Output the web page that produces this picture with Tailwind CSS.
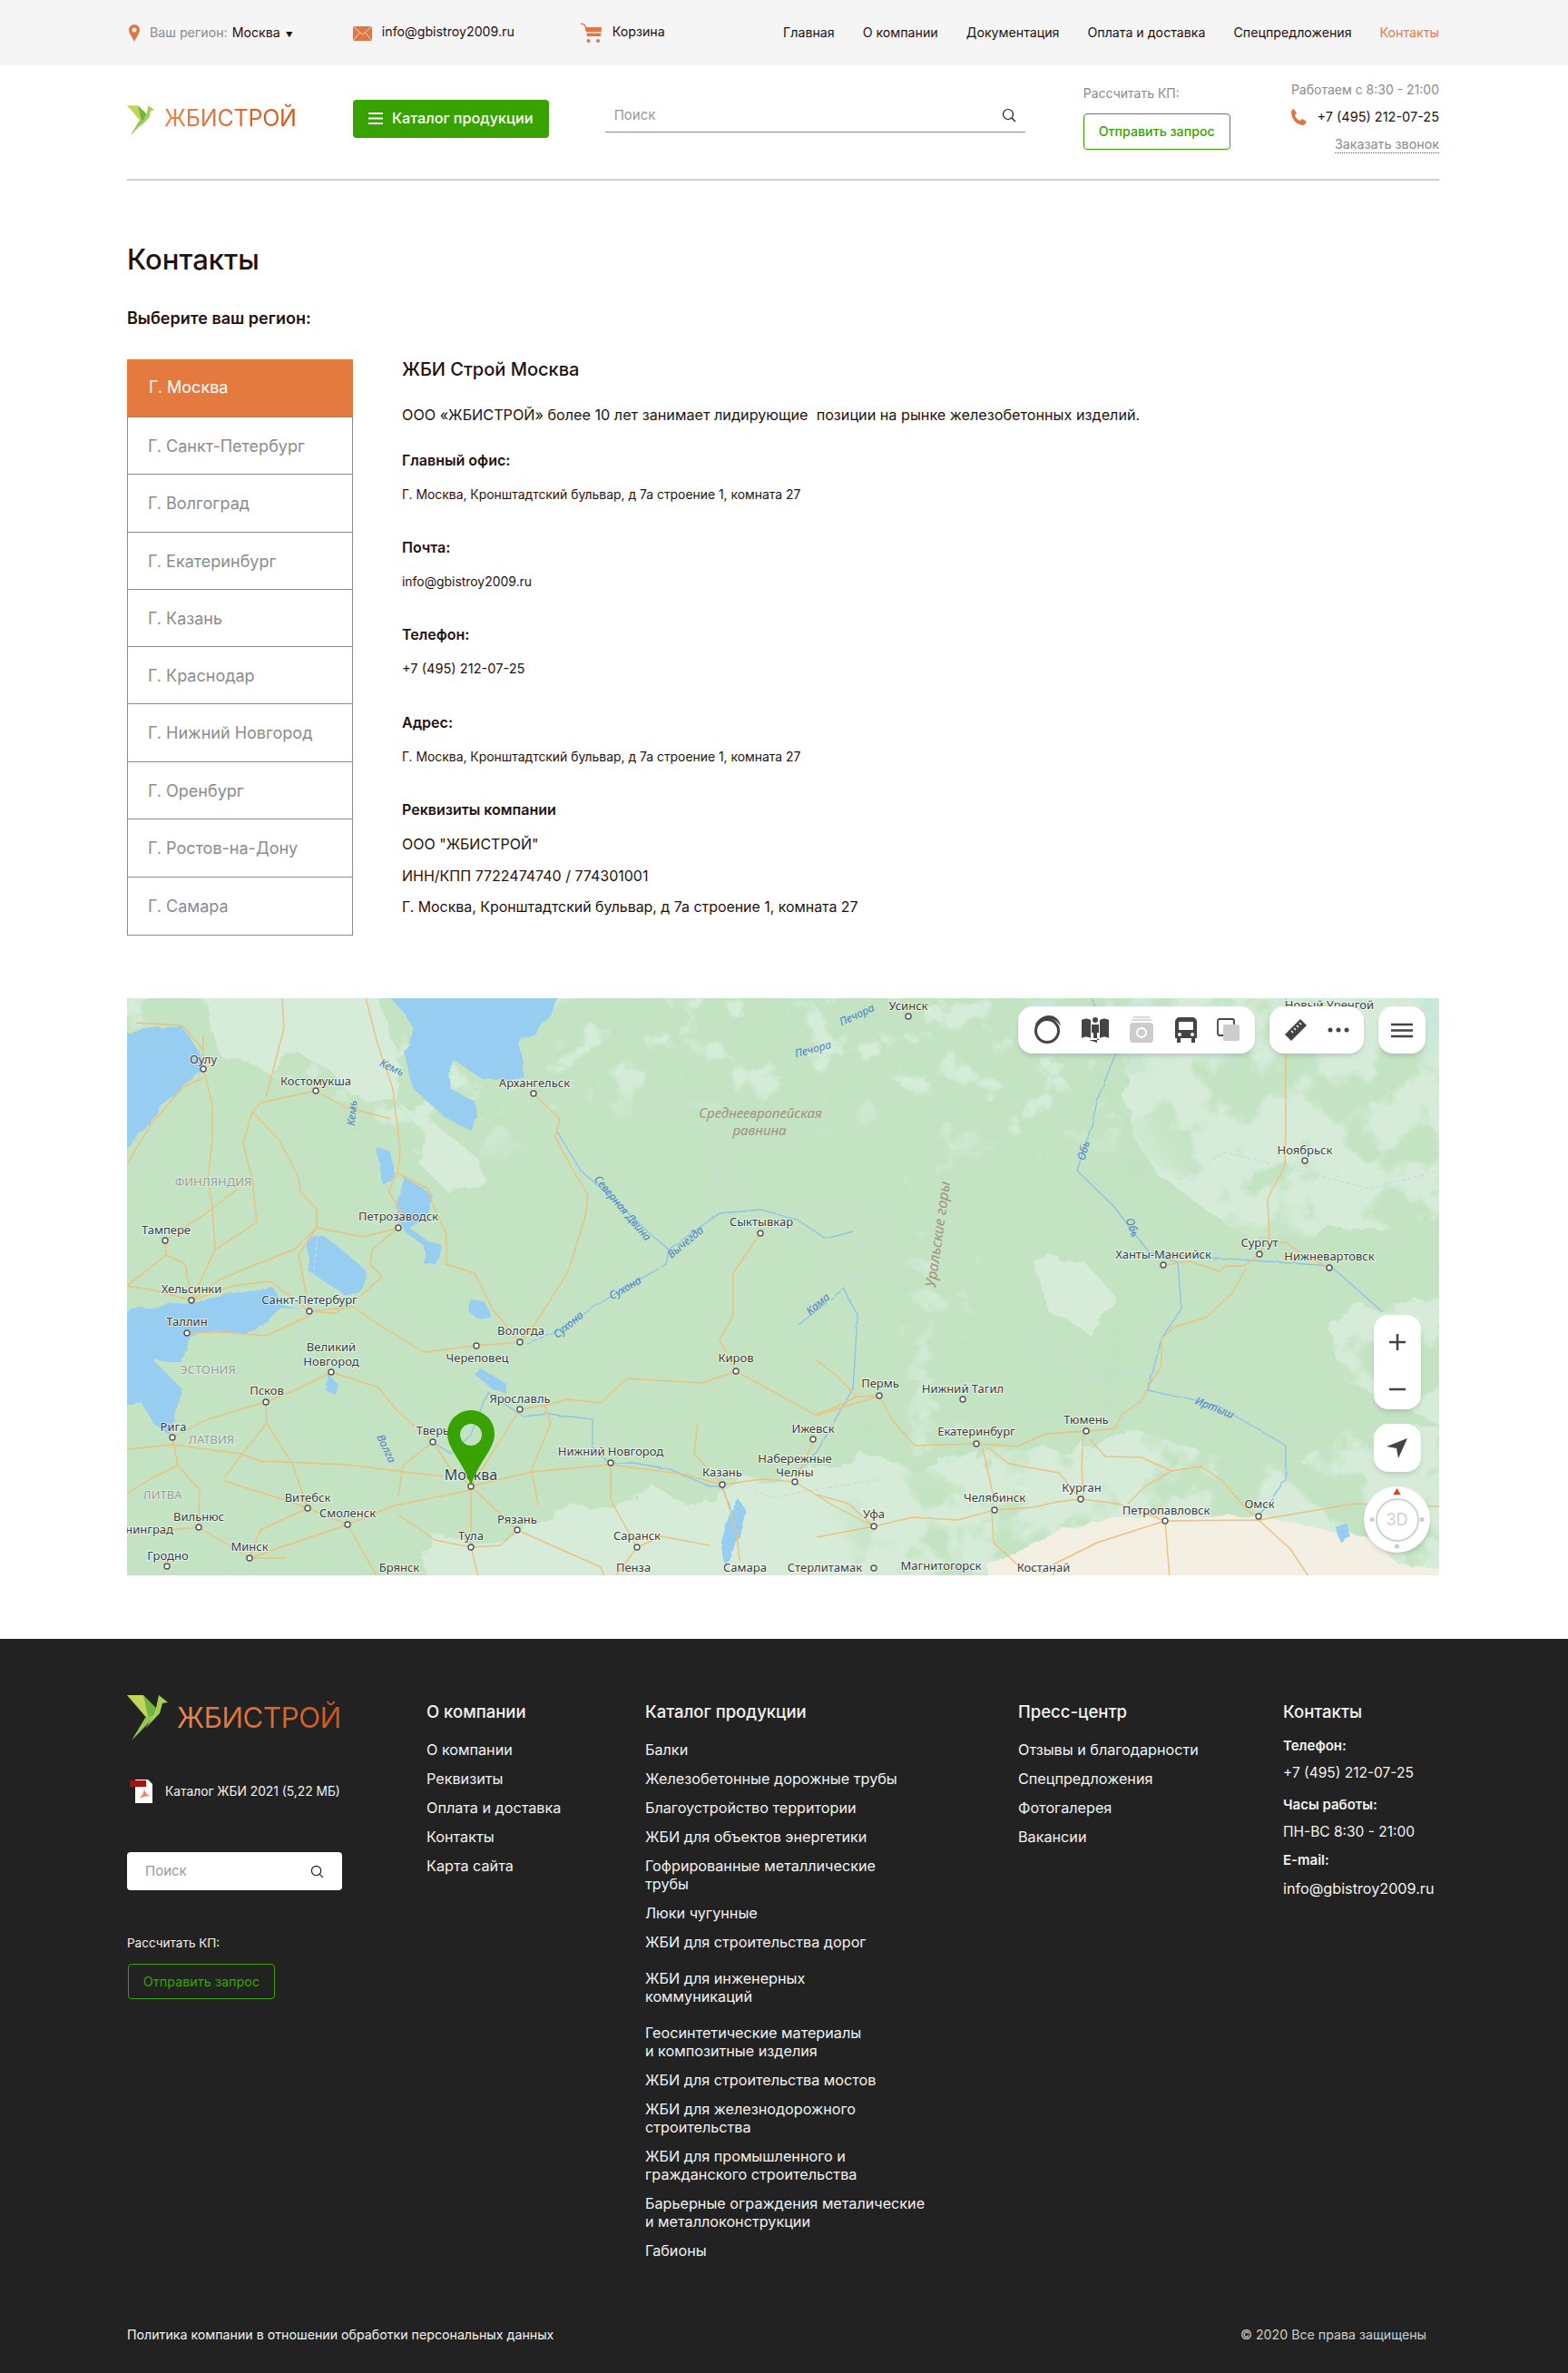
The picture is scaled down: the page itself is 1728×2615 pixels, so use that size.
<!DOCTYPE html>
<html lang="ru">
<head>
    <meta charset="UTF-8">
    <meta name="viewport" content="width=device-width, initial-scale=1.0">
    <title>Контакты - ЖБИСТРОЙ</title>
    <script src="https://cdn.jsdelivr.net/npm/@tailwindcss/browser@4"></script>
</head>
<body class="bg-white text-[#1f1210] font-['Inter',sans-serif] text-[16px]">

    <!-- top bar -->
    <div class="h-[72px] bg-[#f5f5f5]">
        <div class="w-[1446px] ml-[140px] h-full flex items-center text-[14.2px]">
            <svg class="w-[12px] h-[19px] ml-[2px] mt-[1px]" viewBox="0 0 12 19"><path fill-rule="evenodd" fill="#dd7744" d="M6 0a6 6 0 0 1 6 6c0 4-4 8-6 13C4 14 0 10 0 6a6 6 0 0 1 6-6zm0 3.500a2.500 2.500 0 1 0 0 5 2.500 2.500 0 0 0 0-5z"/></svg>
            <span class="ml-[11px] text-[#8c8c8c]">Ваш регион:</span>
            <span class="ml-[5px]">Москва</span>
            <span class="ml-[6px] text-[8px] mt-[3px]">▼</span>
            <svg class="w-[21px] h-[16px] ml-[66px] mt-[2px]" viewBox="0 0 21 16"><rect width="21" height="16" fill="#dd7744"/><path d="M0 0l10.500 9L21 0M0 16l7.500-9M21 16l-7.500-9" fill="none" stroke="#f7d9c8" stroke-width="1"/></svg>
            <span class="ml-[11px] -mt-[2px]">info@gbistroy2009.ru</span>
            <svg class="w-[23px] h-[22px] ml-[73px]" viewBox="0 0 23 22"><path fill="#dd7744" d="M0 0l5 2 1 3h17l-1 10H7L4 3 0 1.500z"/><circle cx="8.500" cy="20" r="2" fill="#dd7744"/><circle cx="19" cy="20" r="2" fill="#dd7744"/><rect x="6" y="10" width="16" height="1.500" fill="#f5f5f5"/></svg>
            <span class="ml-[12px] -mt-[2px]">Корзина</span>
            <nav class="ml-auto flex gap-[31px] -mt-[1px]">
                <a href="#">Главная</a>
                <a href="#">О компании</a>
                <a href="#">Документация</a>
                <a href="#">Оплата и доставка</a>
                <a href="#">Спецпредложения</a>
                <a href="#" class="text-[#e57b45]">Контакты</a>
            </nav>
        </div>
    </div>

    <!-- header -->
    <header class="w-[1446px] ml-[140px] h-[127px] border-b-2 border-[#cfcfcf] flex items-center relative">
        <svg class="w-[31px] h-[34px] -mt-[3px]" viewBox="0 0 46 50"><path fill="#c0d65a" d="M0 0h18l8 15-2 13z"/><path fill="#74b243" d="M18 0l14 14-6 14-2 0z"/><path fill="#93c653" d="M20 25l13-4L5 50z"/><path fill="#a5cf52" d="M26 28l6-14 3-14 10 8-6 1-3 11-16 17z"/></svg>
        <span class="ml-[10px] -mt-[9px] text-[25px] leading-[1.3] tracking-[-0.2px] bg-linear-to-r from-[#e8854d] to-[#cf5514] bg-clip-text text-transparent">ЖБИСТРОЙ</span>
        <a href="#" class="ml-[62px] w-[216px] h-[42px] rounded-[4px] bg-[#38a200] text-white flex items-center justify-center text-[16.2px] font-medium -mt-[8px]">
            <svg class="w-[16px] h-[13px] mr-[10px]" viewBox="0 0 16 13"><path d="M0 1h16M0 6.500h16M0 12h16" stroke="#fff" stroke-width="2"/></svg>
            Каталог продукции
        </a>
        <div class="ml-[62px] w-[463px] h-[37px] border-b border-[#de6c32] flex items-center justify-between pl-[10px] pr-[10px] -mt-[14px] text-[15px] text-[#9a9a9a]">
            <span>Поиск</span>
            <svg class="w-[16px] h-[16px]" viewBox="0 0 16 16"><circle cx="7" cy="7" r="5.500" fill="none" stroke="#1f1210" stroke-width="1.200"/><path d="M11 11l4 4" stroke="#1f1210" stroke-width="1.200"/></svg>
        </div>
        <div class="ml-[64px] w-[163px] -mt-[14px]">
            <div class="text-[14px] text-[#8c8c8c] mb-[12px] mt-[1px]">Рассчитать КП:</div>
            <a href="#" class="w-[162px] h-[40px] rounded-[4px] border border-[#38a200] text-[#38a200] text-[14.2px] font-medium flex items-center justify-center">Отправить запрос</a>
        </div>
        <div class="ml-auto -mt-[12px] flex flex-col items-end">
            <div class="text-[14px] text-[#8c8c8c] leading-[20px]">Работаем с 8:30 - 21:00</div>
            <div class="flex items-center text-[14.5px] leading-[20px] mt-[10px]">
                <svg class="w-[18px] h-[18px] mr-[11px]" viewBox="0 0 18 18"><path fill="#dd7744" d="M4 0l3 5-2 2c1 3 3 5 6 6l2-2 5 3-2 3c-1 1-2 1-3 1C6 17 1 10 1 4c0-1 0-2 1-3z"/></svg>
                +7 (495) 212-07-25
            </div>
            <a href="#" class="text-[14.3px] text-[#8c8c8c] leading-[18px] mt-[11px] border-b border-dotted border-[#555]">Заказать звонок</a>
        </div>
    </header>

    <!-- contacts -->
    <main class="w-[1446px] ml-[140px]">
        <h1 class="mt-[67px] text-[31px] leading-[40px] font-medium">Контакты</h1>
        <p class="mt-[33px] text-[18px] leading-[24px] font-semibold">Выберите ваш регион:</p>

        <div class="mt-[33px] flex h-[635px]">
            <ul class="w-[249px] text-[18px] shrink-0 border-x border-b border-[#8a8a8a] text-[#8c8c8c] flex flex-col">
                <li class="h-[64px] -mx-px bg-[#e57a40] text-white flex items-center pl-[24px] pb-[2px] border-b border-[#8a8a8a]">Г. Москва</li>
                <li class="h-[63px] flex items-center pl-[22px] border-b border-[#8a8a8a]">Г. Санкт-Петербург</li>
                <li class="h-[64px] flex items-center pl-[22px] border-b border-[#8a8a8a]">Г. Волгоград</li>
                <li class="h-[63px] flex items-center pl-[22px] border-b border-[#8a8a8a]">Г. Екатеринбург</li>
                <li class="h-[63px] flex items-center pl-[22px] border-b border-[#8a8a8a]">Г. Казань</li>
                <li class="h-[63px] flex items-center pl-[22px] border-b border-[#8a8a8a]">Г. Краснодар</li>
                <li class="h-[64px] flex items-center pl-[22px] border-b border-[#8a8a8a]">Г. Нижний Новгород</li>
                <li class="h-[63px] flex items-center pl-[22px] border-b border-[#8a8a8a]">Г. Оренбург</li>
                <li class="h-[64px] flex items-center pl-[22px] border-b border-[#8a8a8a]">Г. Ростов-на-Дону</li>
                <li class="h-[63px] flex items-center pl-[22px]">Г. Самара</li>
            </ul>
            <div class="ml-[54px]">
                <h2 class="text-[20px] leading-[24px] font-medium -mt-px">ЖБИ Строй Москва</h2>
                <p class="mt-[26px] leading-[24px] text-[16.2px]">ООО «ЖБИСТРОЙ» более 10 лет занимает лидирующие&nbsp; позиции на рынке железобетонных изделий.</p>
                <h3 class="mt-[26px] leading-[24px] font-semibold text-[16px]">Главный офис:</h3>
                <p class="mt-[14px] leading-[24px] text-[13.9px]">Г. Москва, Кронштадтский бульвар, д 7а строение 1, комната 27</p>
                <h3 class="mt-[34px] leading-[24px] font-semibold text-[16px]">Почта:</h3>
                <p class="mt-[14px] leading-[24px] text-[13.9px]">info@gbistroy2009.ru</p>
                <h3 class="mt-[34px] leading-[24px] font-semibold text-[16px]">Телефон:</h3>
                <p class="mt-[14px] leading-[24px] text-[14.6px]">+7 (495) 212-07-25</p>
                <h3 class="mt-[35px] leading-[24px] font-semibold text-[16px]">Адрес:</h3>
                <p class="mt-[14px] leading-[24px] text-[13.9px]">Г. Москва, Кронштадтский бульвар, д 7а строение 1, комната 27</p>
                <h3 class="mt-[34px] leading-[24px] font-semibold text-[16px]">Реквизиты компании</h3>
                <p class="mt-[14px] leading-[24px]">ООО "ЖБИСТРОЙ"</p>
                <p class="mt-[11px] leading-[24px]">ИНН/КПП 7722474740 / 774301001</p>
                <p class="mt-[11px] leading-[24px] text-[15.9px]">Г. Москва, Кронштадтский бульвар, д 7а строение 1, комната 27</p>
            </div>
        </div>

        <!-- map -->
        <div class="relative mt-[69px] h-[636px] overflow-hidden">
            <svg class="absolute inset-0 w-full h-full" viewBox="0 0 1446 636">
                <defs>
                    <filter id="rough" x="-5%" y="-5%" width="110%" height="110%"><feTurbulence type="fractalNoise" baseFrequency=".035" numOctaves="4" seed="3"/><feDisplacementMap in="SourceGraphic" scale="26"/></filter>
                    <filter id="coast" x="-5%" y="-5%" width="110%" height="110%"><feTurbulence type="fractalNoise" baseFrequency=".05" numOctaves="3" seed="5"/><feDisplacementMap in="SourceGraphic" scale="8"/></filter>
                    <filter id="wiggle" x="-5%" y="-5%" width="110%" height="110%"><feTurbulence type="fractalNoise" baseFrequency=".06" numOctaves="2" seed="9"/><feDisplacementMap in="SourceGraphic" scale="3"/></filter>
                    <filter id="soft" x="-30%" y="-30%" width="160%" height="160%"><feGaussianBlur stdDeviation="22"/></filter>
                    <filter id="patchLight" x="0" y="0" width="100%" height="100%" color-interpolation-filters="sRGB"><feTurbulence type="fractalNoise" baseFrequency=".028" numOctaves="5" seed="11"/><feColorMatrix values="0 0 0 0 .835  0 0 0 0 .925  0 0 0 0 .85  7 0 0 0 -3.950"/></filter>
                    <filter id="patchMid" x="0" y="0" width="100%" height="100%" color-interpolation-filters="sRGB"><feTurbulence type="fractalNoise" baseFrequency=".016" numOctaves="5" seed="21"/><feColorMatrix values="0 0 0 0 .765  0 0 0 0 .89  0 0 0 0 .76  9 0 0 0 -4.500"/></filter>
                    <filter id="patchTeal" x="0" y="0" width="100%" height="100%" color-interpolation-filters="sRGB"><feTurbulence type="fractalNoise" baseFrequency=".02" numOctaves="4" seed="31"/><feColorMatrix values="0 0 0 0 .78  0 0 0 0 .91  0 0 0 0 .85  8 0 0 0 -4.200"/></filter>
                    <mask id="maskNorth" maskUnits="userSpaceOnUse" x="0" y="0" width="1446" height="636"><path fill="#fff" filter="url(#soft)" d="M-60 -60H1120V150L1000 175 900 130 740 130 600 110 470 130 340 190 400 215 340 220 240 110 100 70-60 30z"/></mask>
                    <mask id="maskUral" maskUnits="userSpaceOnUse" x="0" y="0" width="1446" height="636"><path fill="#fff" d="M875 140L925 140 925 660 860 660 860 500z" filter="url(#soft)"/></mask>
                    <mask id="maskEast" maskUnits="userSpaceOnUse" x="0" y="0" width="1446" height="636"><path fill="#fff" filter="url(#soft)" d="M1100-60H1520V290L1330 280 1240 270 1180 230 1110 130zM1130 300L1520 300V700H800V520L1000 490 1090 470 1130 440z"/></mask>
                    <mask id="maskTeal" maskUnits="userSpaceOnUse" x="0" y="0" width="1446" height="636"><path fill="#fff" d="M980-60H1520V60H980z" filter="url(#soft)"/></mask>
                </defs>
                <rect width="1446" height="636" fill="#c3e3c2"/>
                <!-- lighter land -->
                <g fill="#d6ecd9" filter="url(#rough)">
                    <path d="M1110 -20L1466 -20 1466 240 1340 255 1240 265 1200 240 1130 190 1100 130Z"/>
                    <path d="M1000 500L1070 490 1100 470 1180 500 1290 520 1330 480 1466 470 1466 660 950 660 900 590 950 500Z"/>
                    <path d="M760 520L830 505 870 520 940 500 960 660 700 660Z"/>
                    <path d="M312 660L339 593 402 603 455 583 482 556 536 559 580 539 612 556 638 546 700 530 760 520 760 660Z"/>
                    <path d="M85 -20L270 -20 300 60 300 120 335 135 385 175 398 205 357 217 325 185 325 145 295 112 250 110 220 75 175 60 155 80 100 60Z"/>
                    <path d="M1320 350L1446 330 1446 470 1340 420z"/>
                    <path d="M1000 290L1050 285 1090 330 1060 370 1010 340z"/>
                </g>
                <g mask="url(#maskNorth)"><rect width="1446" height="636" filter="url(#patchLight)"/></g>
                <g mask="url(#maskUral)"><rect width="1446" height="636" filter="url(#patchLight)"/></g>
                <g mask="url(#maskEast)"><rect width="1446" height="636" filter="url(#patchMid)"/></g>
                <g mask="url(#maskTeal)"><rect width="1446" height="636" filter="url(#patchTeal)"/></g>
                <path d="M950 660L950 624 1025 587 1087 572 1246 570 1326 587 1370 594 1401 624 1466 630 1466 660Z" fill="#f3efe2" filter="url(#coast)"/>
                <!-- water -->
                <g fill="#97cdf0" filter="url(#coast)">
                    <path d="M281 -10L306 17 316 33 304 57 316 100 352 133 378 145 388 133 383 113 357 100 352 83 362 70 393 90H439L431 50 459 30 482 -10z"/>
                    <path d="M-10 40L35 33 60 30 80 60 84 78 60 100 35 120 20 145 -10 175z"/>
                    <path d="M-10 345L70 335 160 318 175 340 190 340 165 345 150 360 130 372 90 365 70 375 60 400H-10z"/>
                    <path d="M-10 400H30L60 430 55 460 45 480 30 470 15 445 -10 450z"/>
                    <path d="M199 267L214 260 240 280 263 300 260 320 240 327 199 300z"/>
                    <path d="M306 197L337 217 332 240 311 253 332 267 347 273 342 293H327V273L306 257 296 230z"/>
                    <path d="M276 165L291 170 296 195 281 205z"/>
                    <path d="M378 330L395 335 400 350 388 355 376 345z"/>
                    <path d="M392 410L418 425 418 436 402 430 384 415z"/>
                    <path d="M222 415L234 427 230 437 218 431z"/>
                    <path d="M662 570L674 552 682 564 676 588 668 618 658 626 654 598z"/>
                    <path d="M1330 580L1345 580 1350 595 1338 600z"/>
                </g>
                <!-- rivers -->
                <g fill="none" stroke="#8cc0ec" stroke-width="1.300" filter="url(#wiggle)">
                    <path d="M474 147L500 190 531 217 577 260 597 277 594 293 531 330 469 370 440 380"/>
                    <path d="M597 277L653 237 699 233 740 245 770 265 800 257"/>
                    <path d="M337 489L357 502 379 481 397 434 437 461 464 458 513 464 513 495 531 512 558 512 598 519 638 536 656 539 665 563"/>
                    <path d="M1063 140L1047 190 1087 229 1127 281 1158 291 1162 342 1140 375 1125 432 1202 449 1277 493 1277 530 1247 571"/>
                    <path d="M1127 281L1326 295 1383 345"/>
                    <path d="M1063 0L1090 60 1070 110 1063 140"/>
                    <path d="M740 360L790 320 805 350 800 430 760 500 740 520"/>
                </g>
                <!-- borders -->
                <g fill="none" stroke="#c9d6e6" stroke-width="1.200" stroke-dasharray="4 3">
                    <path d="M570 120L640 115 650 200 690 240 790 230 840 250 760 310 880 300 920 280"/>
                    <path d="M210 260L200 350 170 430 140 490 120 550 110 636"/>
                    <path d="M1160 200L1210 170 1290 190 1370 210 1446 190"/>
                    <path d="M1000 380L1050 400 1060 420 1120 410 1200 440 1240 470 1320 500 1400 490"/>
                    <path d="M470 500L530 540 620 510 710 550 830 530"/>
                </g>
                <!-- roads -->
                <g fill="none" stroke="#ecc07f" stroke-width="1.400" stroke-linejoin="round">
                    <path d="M84 40L84 78 94 117 94 157 89 200 94 230 97 277 77 320 71 333M61 98L84 88M61 98L26 140 0 182M10 27L61 30 84 57"/>
                    <path d="M208 102L148 115 138 125 128 160 138 200 143 247 97 277M171 0L173 33 153 110M138 125L168 157 189 197 191 213 209 233 209 253 184 277 143 293 102 310 71 333"/>
                    <path d="M263 0L276 50 293 100 301 170 298 193 332 210 337 227 352 260 352 293 383 303 403 343 433 379M208 102L240 120 291 133M298 193L288 213 301 233 299 253 260 263 209 253M299 253L270 277 268 293 281 307 255 330 230 347 201 345 189 283 209 253"/>
                    <path d="M448 105L477 133 472 153 490 187 508 217 505 240 492 283 485 303 449 360 433 379M698 259L668 303 668 350 653 377 671 411"/>
                    <path d="M71 333L117 317 158 312 201 345M66 369L107 368 153 372 201 350M201 345L250 340 270 355 327 390 385 383 433 379M0 317L31 322 71 333M42 267L43 283 64 293 69 320M43 283L0 317M42 267L87 237 122 210"/>
                    <path d="M50 484L89 464 153 445 187 431 225 412 277 429 297 454 337 489 357 519 379 538M153 445L154 468 183 515 199 562M0 497L50 492 125 502 147 510 241 514 348 527M50 484L56 515 27 529 0 546M56 515L80 542 79 583M107 529L127 502 154 468M107 532L174 553 199 562 243 580M135 617L243 580 295 559 379 542M79 583L135 617 175 617M0 590L79 583M135 617L147 586 199 562M243 580L277 640"/>
                    <path d="M379 538L379 605 388 640M379 538L430 586 522 627 527 640M379 605L411 603 430 586M379 538L446 522 533 514 616 525 656 536M433 453L402 502 379 538M433 453L458 449 487 442 522 446 551 419 634 424M460 449L467 468 446 519 453 559M533 514L533 553 562 605 536 640M562 605L589 593 643 603M629 468L625 502 656 536M299 549L304 515 337 489M299 569L339 597 379 605"/>
                    <path d="M656 536L700 530 736 533 780 560 823 582M656 536L672 590 675 620M671 411L760 460 829 438M756 490L736 533M634 424L671 411"/>
                    <path d="M1277 140L1276 184 1257 221 1259 264 1246 283M1277 0L1277 140M1233 298L1218 325 1189 352 1153 363 1140 375 1140 405 1125 429 1118 444 1096 459 1089 474 1057 477M1142 294L1171 290 1204 301 1211 295 1231 295 1248 282M1260 269L1277 269 1297 283 1325 297"/>
                    <path d="M829 438L844 466 868 493 936 491 981 494 1012 480 1057 477M829 438L804 439 778 452 760 458M760 399L782 416 804 439M943 496L955 550M950 496L972 513 1027 523 1051 552M1054 479L1052 516 1054 552M1061 486L1078 505 1118 506 1151 521 1184 516 1206 531 1237 567 1247 571M1151 521L1122 538 1103 557"/>
                    <path d="M956 564L999 561 1025 555 1051 552 1092 557 1144 576 1247 575 1352 557 1446 560M760 594L823 582 866 572 915 575 956 564M823 582L795 557 760 547M953 567L955 600 981 624 1010 633M1144 576L1149 640M1144 576L1069 600 1021 624 1021 640M1247 575L1282 607 1304 640"/>
                </g>
                <!-- city dots -->
                <g fill="#fff" stroke="#555" stroke-width="1.400">
                    <circle cx="84" cy="78" r="3"/><circle cx="208" cy="102" r="3"/><circle cx="448" cy="105" r="3"/><circle cx="299" cy="253" r="3"/><circle cx="42" cy="267" r="3"/><circle cx="698" cy="259" r="3"/><circle cx="71" cy="333" r="3"/><circle cx="201" cy="345" r="3"/><circle cx="66" cy="369" r="3"/><circle cx="433" cy="379" r="3"/><circle cx="385" cy="383" r="3"/><circle cx="671" cy="411" r="3"/><circle cx="225" cy="412" r="3"/><circle cx="153" cy="445" r="3"/><circle cx="50" cy="484" r="3"/><circle cx="337" cy="489" r="3"/><circle cx="433" cy="453" r="3"/><circle cx="379" cy="538" r="3"/><circle cx="533" cy="512" r="3"/><circle cx="656" cy="536" r="3"/><circle cx="199" cy="562" r="3"/><circle cx="243" cy="580" r="3"/><circle cx="79" cy="583" r="3"/><circle cx="135" cy="617" r="3"/><circle cx="44" cy="626" r="3"/><circle cx="430" cy="586" r="3"/><circle cx="379" cy="605" r="3"/><circle cx="562" cy="605" r="3"/><circle cx="1298" cy="179" r="3"/><circle cx="1142" cy="294" r="3"/><circle cx="1248" cy="282" r="3"/><circle cx="1325" cy="297" r="3"/><circle cx="829" cy="438" r="3"/><circle cx="921" cy="442" r="3"/><circle cx="936" cy="491" r="3"/><circle cx="1057" cy="477" r="3"/><circle cx="756" cy="486" r="3"/><circle cx="736" cy="533" r="3"/><circle cx="823" cy="582" r="3"/><circle cx="956" cy="564" r="3"/><circle cx="1051" cy="552" r="3"/><circle cx="1144" cy="576" r="3"/><circle cx="1247" cy="571" r="3"/><circle cx="823" cy="628" r="3"/><circle cx="861" cy="20" r="3"/>
                </g>
                <!-- city labels -->
                <g font-family="'Noto Sans',sans-serif" font-size="13" fill="#3d3d3d" stroke="#fff" stroke-opacity=".6" stroke-width="2" paint-order="stroke" text-anchor="middle">
                    <text x="84" y="72">Оулу</text><text x="208" y="96">Костомукша</text><text x="449" y="98">Архангельск</text><text x="299" y="245">Петрозаводск</text><text x="43" y="260">Тампере</text><text x="699" y="251">Сыктывкар</text><text x="71" y="325">Хельсинки</text><text x="201" y="337">Санкт-Петербург</text><text x="66" y="361">Таллин</text><text x="434" y="371">Вологда</text><text x="386" y="401">Череповец</text><text x="671" y="401">Киров</text><text x="225" y="389">Великий</text><text x="225" y="405">Новгород</text><text x="154" y="437">Псков</text><text x="51" y="477">Рига</text><text x="337" y="481">Тверь</text><text x="433" y="446">Ярославль</text><text x="533" y="504">Нижний Новгород</text><text x="656" y="527">Казань</text><text x="199" y="555">Витебск</text><text x="243" y="572">Смоленск</text><text x="79" y="576">Вильнюс</text><text x="135" y="609">Минск</text><text x="45" y="619">Гродно</text><text x="51" y="590" text-anchor="end">нинград</text><text x="430" y="579">Рязань</text><text x="379" y="597">Тула</text><text x="562" y="597">Саранск</text><text x="558" y="632">Пенза</text><text x="300" y="632">Брянск</text><text x="681" y="632">Самара</text>
                    <text x="861" y="13">Усинск</text><text x="1325" y="12">Новый Уренгой</text><text x="1298" y="172">Ноябрьск</text><text x="1142" y="287">Ханты-Мансийск</text><text x="1248" y="274">Сургут</text><text x="1325" y="289">Нижневартовск</text><text x="830" y="429">Пермь</text><text x="921" y="435">Нижний Тагил</text><text x="936" y="482">Екатеринбург</text><text x="1057" y="469">Тюмень</text><text x="756" y="479">Ижевск</text><text x="736" y="512">Набережные</text><text x="736" y="527">Челны</text><text x="823" y="573">Уфа</text><text x="956" y="555">Челябинск</text><text x="1052" y="544">Курган</text><text x="1145" y="569">Петропавловск</text><text x="1248" y="562">Омск</text><text x="769" y="632">Стерлитамак</text><text x="897" y="630">Магнитогорск</text><text x="1010" y="632">Костанай</text>
                </g>
                <text x="379" y="531" font-family="'Noto Sans',sans-serif" font-size="16" fill="#3d3d3d" stroke="#fff" stroke-opacity=".6" stroke-width="2" paint-order="stroke" text-anchor="middle">Москва</text>
                <g font-family="'Noto Sans',sans-serif" font-size="13" fill="#9a9a9a" stroke="#fff" stroke-opacity=".4" stroke-width="2" paint-order="stroke" text-anchor="middle">
                    <text x="89" y="414">ЭСТОНИЯ</text><text x="93" y="491">ЛАТВИЯ</text><text x="39" y="552">ЛИТВА</text><text x="95" y="207">ФИНЛЯНДИЯ</text>
                </g>
                <g font-family="'Noto Sans',sans-serif" font-size="15" font-style="italic" fill="#a48f80" text-anchor="middle">
                    <text x="698" y="132">Среднеевропейская</text><text x="697" y="151">равнина</text>
                    <text transform="translate(899 261) rotate(-82)" font-size="16">Уральские горы</text>
                </g>
                <g font-family="'Noto Sans',sans-serif" font-size="12" font-style="italic" fill="#4d82c9" text-anchor="middle">
                    <text transform="translate(806 22) rotate(-25)">Печора</text>
                    <text transform="translate(757 60) rotate(-15)">Печора</text>
                    <text transform="translate(290 80) rotate(25)">Кемь</text>
                    <text transform="translate(252 127) rotate(-85)">Кемь</text>
                    <text transform="translate(543 234) rotate(50)">Северная Двина</text>
                    <text transform="translate(618 272) rotate(-40)">Вычегда</text>
                    <text transform="translate(551 323) rotate(-30)">Сухона</text>
                    <text transform="translate(489 363) rotate(-40)">Сухона</text>
                    <text transform="translate(764 340) rotate(-40)">Кама</text>
                    <text transform="translate(282 498) rotate(65)">Волга</text>
                    <text transform="translate(1058 169) rotate(-75)">Обь</text>
                    <text transform="translate(1104 254) rotate(70)">Обь</text>
                    <text transform="translate(1197 455) rotate(22)">Иртыш</text>
                </g>
                <!-- placemark -->
                <path fill="#38a200" fill-rule="evenodd" d="M379 537C370 510 353 497 353 480A26 26 0 1 1 405 480C405 497 388 510 379 537ZM379 469A12 12 0 1 0 379 493A12 12 0 1 0 379 469Z"/>
            </svg>

            <!-- map controls -->
            <div class="absolute left-[982px] top-[9px] w-[261px] h-[52px] rounded-[16px] bg-white shadow-md flex items-center justify-around px-[5px]">
                <svg class="w-[32px] h-[32px]" viewBox="0 0 32 32"><circle cx="16" cy="17" r="12.500" fill="none" stroke="#444" stroke-width="3"/><path d="M2 12C5 4 12 0 18 0c6 0 12 4 13 12-3-5-8-9-15-8C10 5 5 8 2 12z" fill="#444"/></svg>
                <svg class="w-[32px] h-[30px]" viewBox="0 0 32 30"><path fill="#444" d="M1 4c4-2 7-2 10 0v20c-3-2-6-2-10 0zM21 4c3-2 6-2 10 0v20c-4-2-7-2-10 0z"/><circle cx="16" cy="4" r="3" fill="#444"/><path d="M12 9h8v9h-2v6h-4v-6h-2z" fill="#444"/><path d="M9 26h12l-3-2v5z" fill="#444"/></svg>
                <svg class="w-[28px] h-[30px]" viewBox="0 0 28 30"><path d="M5 1h18M3 4h22" stroke="#ccc" stroke-width="1.500"/><rect x="1" y="7" width="26" height="22" rx="4" fill="#ccc"/><circle cx="14" cy="18" r="5" fill="none" stroke="#fff" stroke-width="2"/></svg>
                <svg class="w-[26px] h-[28px]" viewBox="0 0 26 28"><path fill="#444" fill-rule="evenodd" d="M6 0h14a5 5 0 0 1 5 5v18h-2v5h-4v-5H7v5H3v-5H1V5a5 5 0 0 1 5-5zM5 5v9h16V5zM6 17a2 2 0 1 0 0 4 2 2 0 0 0 0-4zm14 0a2 2 0 1 0 0 4 2 2 0 0 0 0-4z"/></svg>
                <svg class="w-[26px] h-[26px]" viewBox="0 0 26 26"><rect x="1" y="1" width="18" height="18" rx="2" fill="none" stroke="#444" stroke-width="1.800"/><rect x="7" y="7" width="18" height="18" rx="2" fill="#ccc"/></svg>
            </div>
            <div class="absolute left-[1259px] top-[9px] w-[104px] h-[52px] rounded-[16px] bg-white shadow-md flex items-center justify-around px-[5px]">
                <svg class="w-[26px] h-[26px]" viewBox="0 0 26 26"><path fill="#444" d="M18 1l7 7L8 25l-7-7z"/><path d="M17 5l2 2M14 8l2 2M11 11l2 2M8 14l2 2" stroke="#fff" stroke-width="1.500"/></svg>
                <svg class="w-[24px] h-[6px]" viewBox="0 0 24 6"><circle cx="3" cy="3" r="2.500" fill="#444"/><circle cx="12" cy="3" r="2.500" fill="#444"/><circle cx="21" cy="3" r="2.500" fill="#444"/></svg>
            </div>
            <div class="absolute left-[1379px] top-[9px] w-[52px] h-[52px] rounded-[16px] bg-white shadow-md flex items-center justify-center">
                <svg class="w-[24px] h-[17px]" viewBox="0 0 24 17"><path d="M0 2h24M0 8.500h24M0 15h24" stroke="#444" stroke-width="2.500"/></svg>
            </div>
            <div class="absolute left-[1374px] top-[349px] w-[52px] h-[104px] rounded-[16px] bg-white shadow-md flex flex-col items-center justify-around">
                <svg class="w-[20px] h-[20px]" viewBox="0 0 20 20"><path d="M10 1v18M1 10h18" stroke="#444" stroke-width="2.500"/></svg>
                <svg class="w-[20px] h-[4px]" viewBox="0 0 20 4"><path d="M1 2h18" stroke="#444" stroke-width="2.500"/></svg>
            </div>
            <div class="absolute left-[1374px] top-[469px] w-[52px] h-[53px] rounded-[16px] bg-white shadow-md flex items-center justify-center">
                <svg class="w-[24px] h-[24px]" viewBox="0 0 24 24"><path fill="#444" d="M23 1L13 23l-2-11L0 10z"/></svg>
            </div>
            <div class="absolute left-[1363px] top-[538px] w-[73px] h-[73px] rounded-full bg-white shadow-md flex items-center justify-center">
                <div class="w-[48px] h-[48px] rounded-full border-2 border-[#c4dcc6] flex items-center justify-center text-[18px] text-[#d0d0d0]">3D</div>
                <svg class="absolute inset-0 w-[73px] h-[73px]" viewBox="0 0 73 73"><path d="M36.500 2l4 7h-8z" fill="#f03a17"/><circle cx="9" cy="36.500" r="2.500" fill="#ccc"/><circle cx="64" cy="36.500" r="2.500" fill="#ccc"/><circle cx="36.500" cy="66" r="2.500" fill="#ccc"/></svg>
            </div>
        </div>
    </main>

    <!-- footer -->
    <footer class="mt-[70px] h-[809px] bg-[#222222] text-[#f2f2f2] text-[16.2px]">
        <div class="w-[1446px] ml-[140px] relative h-full">
            <div class="flex pt-[62px] h-[740px]">
                <div class="w-[330px]">
                    <div class="flex items-center h-[50px]">
                        <svg class="w-[46px] h-[50px]" viewBox="0 0 46 50"><path fill="#c0d65a" d="M0 0h18l8 15-2 13z"/><path fill="#74b243" d="M18 0l14 14-6 14-2 0z"/><path fill="#93c653" d="M20 25l13-4L5 50z"/><path fill="#a5cf52" d="M26 28l6-14 3-14 10 8-6 1-3 11-16 17z"/></svg>
                        <span class="ml-[9px] text-[31.5px] leading-[1.3] tracking-[-0.6px] bg-linear-to-r from-[#e8854d] to-[#cf5514] bg-clip-text text-transparent">ЖБИСТРОЙ</span>
                    </div>
                    <div class="flex items-center mt-[42px] h-[28px] text-[13.8px]">
                        <svg class="w-[26px] h-[28px] ml-[3px]" viewBox="0 0 26 28"><path fill="#fff" d="M6 1h14l5 5v21H6z"/><path fill="#e84c22" d="M10 22c4-3 6-7 6-13 0 5 2 9 7 10-5 0-9 1-13 3z" opacity=".7"/><rect x="0" y="2" width="18" height="7" fill="#a51414"/></svg>
                        <span class="ml-[13px]">Каталог ЖБИ 2021 (5,22 МБ)</span>
                    </div>
                    <div class="mt-[53px] w-[237px] h-[42px] bg-white rounded-[4px] flex items-center justify-between pl-[20px] pr-[20px] text-[15px] text-[#9a9a9a]">
                        <span>Поиск</span>
                        <svg class="w-[15px] h-[15px]" viewBox="0 0 16 16"><circle cx="7" cy="7" r="5.500" fill="none" stroke="#1f1210" stroke-width="1.200"/><path d="M11 11l4 4" stroke="#1f1210" stroke-width="1.200"/></svg>
                    </div>
                    <div class="mt-[48px] text-[13.5px] leading-[20px]">Рассчитать КП:</div>
                    <a href="#" class="mt-[13px] ml-px w-[162px] h-[39px] rounded-[4px] border border-[#38a200] text-[#38a200] text-[14.4px] flex items-center justify-center">Отправить запрос</a>
                </div>
                <div class="w-[241px]">
                    <h4 class="text-[18.5px] leading-[22px] font-medium mb-[21px] mt-[7px]">О компании</h4>
                    <ul class="flex flex-col gap-[12px] leading-[20px]">
                        <li>О компании</li>
                        <li>Реквизиты</li>
                        <li>Оплата и доставка</li>
                        <li>Контакты</li>
                        <li>Карта сайта</li>
                    </ul>
                </div>
                <div class="w-[411px]">
                    <h4 class="text-[18.5px] leading-[22px] font-medium mb-[21px] mt-[7px]">Каталог продукции</h4>
                    <ul class="flex flex-col gap-[12px] leading-[20px]">
                        <li>Балки</li>
                        <li>Железобетонные дорожные трубы</li>
                        <li>Благоустройство территории</li>
                        <li>ЖБИ для объектов энергетики</li>
                        <li>Гофрированные металлические<br>трубы</li>
                        <li>Люки чугунные</li>
                        <li>ЖБИ для строительства дорог</li>
                        <li class="mt-[8px]">ЖБИ для инженерных<br>коммуникаций</li>
                        <li class="mt-[8px]">Геосинтетические материалы<br>и композитные изделия</li>
                        <li>ЖБИ для строительства мостов</li>
                        <li>ЖБИ для железнодорожного<br>строительства</li>
                        <li>ЖБИ для промышленного и<br>гражданского строительства</li>
                        <li>Барьерные ограждения металические<br>и металлоконструкции</li>
                        <li>Габионы</li>
                    </ul>
                </div>
                <div class="w-[292px]">
                    <h4 class="text-[18.5px] leading-[22px] font-medium mb-[21px] mt-[7px]">Пресс-центр</h4>
                    <ul class="flex flex-col gap-[12px] leading-[20px]">
                        <li>Отзывы и благодарности</li>
                        <li>Спецпредложения</li>
                        <li>Фотогалерея</li>
                        <li>Вакансии</li>
                    </ul>
                </div>
                <div>
                    <h4 class="text-[18.5px] leading-[22px] font-medium mt-[7px] mb-[17px]">Контакты</h4>
                    <div class="font-semibold leading-[20px] text-[15px]">Телефон:</div>
                    <div class="mt-[10px] leading-[20px] text-[15.5px]">+7 (495) 212-07-25</div>
                    <div class="mt-[15px] font-semibold leading-[20px] text-[15px]">Часы работы:</div>
                    <div class="mt-[10px] leading-[20px] text-[15.5px]">ПН-ВС 8:30 - 21:00</div>
                    <div class="mt-[11px] font-semibold leading-[20px] text-[15px]">E-mail:</div>
                    <div class="mt-[11px] leading-[20px]">info@gbistroy2009.ru</div>
                </div>
            </div>
            <div class="flex justify-between text-[14.2px] leading-[20px] pr-[14px] mt-[17px]">
                <span>Политика компании в отношении обработки персональных данных</span>
                <span class="text-[#cccccc]">© 2020 Все права защищены</span>
            </div>
        </div>
    </footer>
</body>
</html>
